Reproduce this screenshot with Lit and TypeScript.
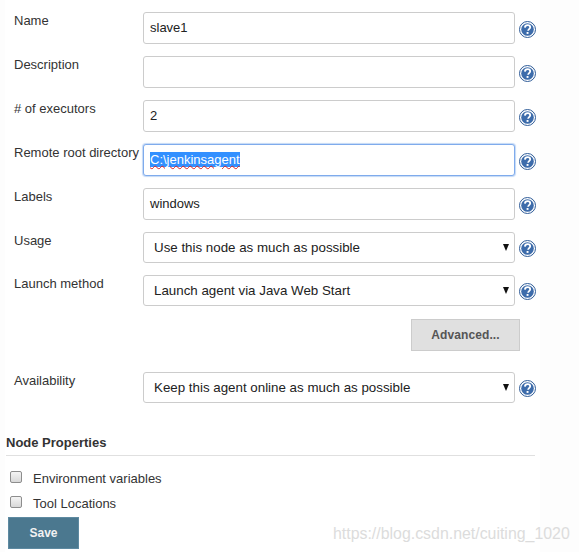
import { LitElement, html, css, svg } from "lit";
import { customElement } from "lit/decorators.js";

const help = svg`<svg class="help" width="17" height="17" viewBox="0 0 17 17" aria-hidden="true">
  <circle cx="8.5" cy="8.5" r="8" fill="#fff" stroke="#2f5c98" stroke-width="1"/>
  <circle cx="8.5" cy="8.5" r="6.3" fill="#3d6cab"/>
  <path d="M5.9 6.6c.1-1.6 1.2-2.4 2.7-2.4s2.6.9 2.6 2.1c0 1.8-2.1 1.9-2.1 3.5" fill="none" stroke="#fff" stroke-width="1.8"/>
  <rect x="7.6" y="11" width="1.9" height="1.9" fill="#fff"/>
</svg>`;

@customElement("app-root")
export class AppRoot extends LitElement {
  static styles = css`
    :host {
      display: block;
      width: 579px;
      height: 552px;
      overflow: hidden;
      background: #fdfdfd;
      font-family: "Liberation Sans", Arial, sans-serif;
      color: #333;
      font-size: 13px;
    }
    .page {
      position: relative;
      box-sizing: border-box;
      width: 535px;
      height: 552px;
      margin-left: 5px;
      padding-top: 12px;
      background: #fff;
    }
    .row {
      display: grid;
      grid-template-columns: 129px 372px 20px;
      padding-left: 9px;
      align-items: start;
    }
    .row > label {
      padding-top: 1px;
      line-height: 15px;
      white-space: nowrap;
    }
    .f {
      box-sizing: border-box;
      display: flex;
      align-items: center;
      width: 372px;
      height: 32px;
      padding: 0 6px 2px;
      border: 1px solid #ccc;
      border-radius: 3px;
      background: #fff;
      font-size: 13px;
      color: #222;
    }
    .sel {
      height: 31px;
      padding: 0 10px;
      position: relative;
      font-size: 13.33px;
    }
    .arrow {
      position: absolute;
      right: 5px;
      top: 11px;
      width: 0;
      height: 0;
      border-left: 3.5px solid transparent;
      border-right: 3.5px solid transparent;
      border-top: 7px solid #111;
    }
    .focus {
      border: 1px solid #7fabec;
      box-shadow: 0 0 1px 1px #c4d9f6;
    }
    .selected {
      background: #3390ff;
      color: #fff;
      text-decoration: underline wavy #e02020 1px;
      text-underline-offset: 1px;
    }
    .help {
      display: block;
      margin: 9px 0 0 4px;
    }
    .has-select .help { margin-top: 8px; }
    .gap { margin-bottom: 12px; }
    .adv-row {
      display: flex;
      justify-content: flex-end;
      width: 515px;
      margin-top: 13px;
    }
    .adv {
      box-sizing: border-box;
      width: 109px;
      height: 32px;
      background: #e0e0e0;
      border: 1px solid #ccc;
      color: #555;
      font: bold 12px "Liberation Sans", Arial, sans-serif;
      letter-spacing: 0.1px;
    }
    .avail { margin-top: 21px; }
    h3 {
      width: 529px;
      margin: 32px 0 0 1px;
      padding-bottom: 5px;
      font-size: 13px;
      line-height: 15px;
      color: #333;
      border-bottom: 1px solid #e0e0e0;
    }
    .check {
      display: flex;
      align-items: center;
      padding-left: 5px;
      height: 25px;
      color: #333;
    }
    .first { margin-top: 10px; }
    .box {
      box-sizing: border-box;
      width: 12px;
      height: 12px;
      margin-right: 11px;
      margin-top: -3px;
      border: 1px solid #8d8d8d;
      border-radius: 2px;
      background: linear-gradient(#f4f4f4, #d8d8d8);
    }
    .save {
      display: block;
      box-sizing: border-box;
      width: 71px;
      height: 32px;
      margin: 1px 0 0 3px;
      background: #4b788f;
      border: 1px solid #5e8aa1;
      color: #f2f2f2;
      font: bold 12px "Liberation Sans", Arial, sans-serif;
    }
    .mark {
      position: absolute;
      left: 328px;
      top: 525px;
      font-size: 15.9px;
      line-height: 18px;
      color: #dcdcdc;
      white-space: nowrap;
    }
  `;

  private text(label: string, value: string) {
    return html`<div class="row gap">
      <label>${label}</label>
      <div class="f">${value}</div>
      ${help}
    </div>`;
  }

  private select(label: string, value: string, cls = "gap") {
    return html`<div class="row has-select ${cls}">
      <label>${label}</label>
      <div class="f sel">${value}<span class="arrow"></span></div>
      ${help}
    </div>`;
  }

  render() {
    return html`<div class="page">
      ${this.text("Name", "slave1")}
      ${this.text("Description", "")}
      ${this.text("# of executors", "2")}
      <div class="row gap">
        <label>Remote root directory</label>
        <div class="f focus"><span class="selected">C:\\jenkinsagent</span></div>
        ${help}
      </div>
      ${this.text("Labels", "windows")}
      ${this.select("Usage", "Use this node as much as possible")}
      ${this.select("Launch method", "Launch agent via Java Web Start", "")}
      <div class="adv-row"><button class="adv">Advanced...</button></div>
      ${this.select("Availability", "Keep this agent online as much as possible", "avail")}
      <h3>Node Properties</h3>
      <div class="check first"><span class="box"></span>Environment variables</div>
      <div class="check"><span class="box"></span>Tool Locations</div>
      <button class="save">Save</button>
      <div class="mark">https://blog.csdn.net/cuiting_1020</div>
    </div>`;
  }
}
